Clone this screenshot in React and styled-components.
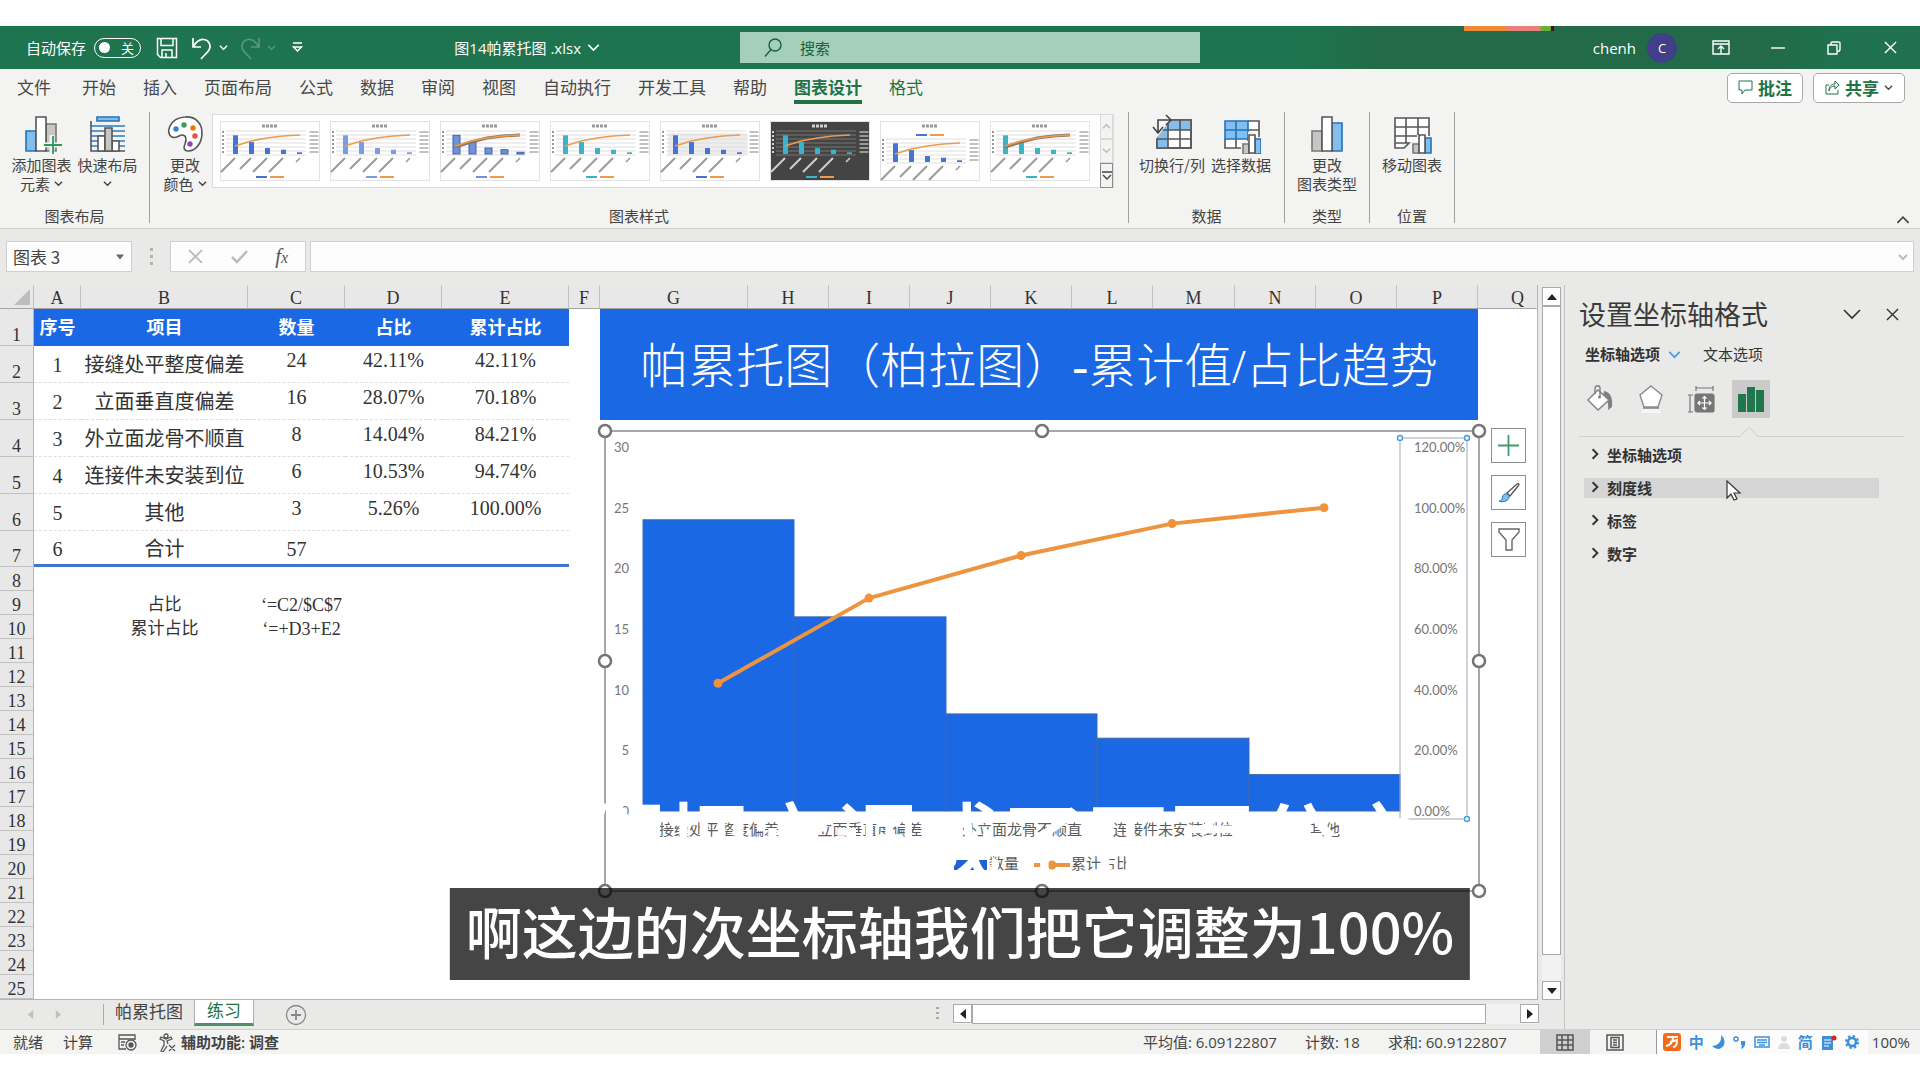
import styled, { createGlobalStyle } from "styled-components";

const sans = `"Open Sans", "Noto Sans CJK SC", sans-serif`;
const cjk = `"Noto Sans CJK SC", "Noto Sans", sans-serif`;
const serif = `"Liberation Serif", "Noto Sans CJK SC", serif`;

const GlobalStyle = createGlobalStyle`
  * {
    box-sizing: border-box;
  }

  body {
    margin: 0;
    background: #fff;
    font-family: ${cjk};
    color: #444;
  }

  button,
  input {
    font: inherit;
    color: inherit;
    margin: 0;
    padding: 0;
    border: 0;
    background: none;
  }

  svg {
    display: block;
    flex-shrink: 0;
  }
`;

const Stage = styled.div`
  position: relative;
  min-height: 100vh;
  padding: 26px 0;
  overflow: hidden;
`;

const Window = styled.div`
  background: #e9e9e8;
`;

/* ---------- title bar ---------- */

const TitleBar = styled.header`
  position: relative;
  display: grid;
  grid-template-columns: 740px 460px 1fr;
  align-items: center;
  height: 43px;
  background: linear-gradient(90deg, #1e744e 68%, #226a48 72%, #226a48 92%, #1f724d 96%);
  color: #fff;
  font-size: 15px;
  line-height: 20px;
`;

const QuickAccess = styled.div`
  display: flex;
  align-items: center;
  padding-left: 26px;
`;

const AutoSave = styled.label`
  display: flex;
  align-items: center;
  gap: 8px;
  margin-right: 15px;
`;

const Toggle = styled.span`
  display: flex;
  align-items: center;
  justify-content: space-between;
  width: 47px;
  height: 20px;
  padding: 0 6px 0 4px;
  border: 1px solid #fff;
  border-radius: 10px;
  font-size: 13px;

  input {
    appearance: none;
    width: 11px;
    height: 11px;
    border-radius: 50%;
    background: #fff;
  }
`;

const BarButton = styled.button`
  display: flex;
  align-items: center;
  justify-content: center;
  width: ${(props) => props.$w || 22}px;
  height: 24px;
  margin-right: ${(props) => props.$gap || 0}px;
  opacity: ${(props) => (props.disabled ? 0.25 : 1)};
`;

const FileName = styled.button`
  display: flex;
  align-items: center;
  gap: 6px;
  margin-left: auto;
  margin-right: 140px;
  font-family: ${sans};
`;

const SearchBox = styled.label`
  display: flex;
  align-items: center;
  gap: 18px;
  height: 31px;
  padding-left: 24px;
  background: #a6cfbb;
  color: #17613f;

  input {
    flex: 1;
    min-width: 0;
    outline: 0;
  }

  input::placeholder {
    color: #17613f;
    opacity: 1;
  }
`;

const WindowButtons = styled.div`
  display: flex;
  align-items: center;
  justify-content: flex-end;
  padding-right: 22px;
  font-family: ${sans};
`;

const Avatar = styled.span`
  display: flex;
  align-items: center;
  justify-content: center;
  width: 30px;
  height: 30px;
  margin: 0 35px 0 11px;
  border-radius: 50%;
  background: #413f87;
  font-size: 13px;
`;

const StickerEdge = styled.div`
  position: absolute;
  top: 0;
  right: 366px;
  width: 90px;
  height: 5px;
  background: linear-gradient(90deg, #ee8a35 0 45%, #e8807c 50% 84%, #6cae3a 86% 96%, #3a1712 97%);
`;

/* ---------- ribbon ---------- */

const TabRow = styled.nav`
  display: flex;
  align-items: flex-start;
  height: 41px;
  padding: 4px 15px 0 17px;
  background: #f3f3f2;
  font-size: 17px;
`;

const RibbonTab = styled.button`
  height: 31px;
  margin-right: ${(props) => props.$gap || 27}px;
  line-height: 28px;
  white-space: nowrap;
  color: ${(props) => (props.$green ? "#217346" : "#484848")};
  font-weight: ${(props) => (props.$active ? 700 : 400)};
  border-bottom: 4px solid ${(props) => (props.$active ? "#217346" : "transparent")};
`;

const Actions = styled.div`
  display: flex;
  gap: 10px;
  margin-left: auto;
`;

const ActionButton = styled.button`
  display: flex;
  align-items: center;
  justify-content: center;
  gap: 5px;
  width: ${(props) => props.$w}px;
  height: 30px;
  padding-bottom: 2px;
  border: 1px solid #a9a9a9;
  border-radius: 5px;
  background: #fff;
  color: #217346;
  font-weight: 700;
`;

const Ribbon = styled.section`
  display: flex;
  height: 119px;
  background: #f3f3f2;
  border-bottom: 1px solid #d2d2d0;
  font-size: 15px;
`;

const Group = styled.div`
  display: flex;
  flex-direction: column;
  justify-content: space-between;
  width: ${(props) => props.$w}px;
  height: 111px;
  margin-top: 2px;
  padding-top: 2px;
  border-right: 1px solid #a0a0a0;
`;

const GroupItems = styled.div`
  display: flex;
  justify-content: center;
`;

const GroupLabel = styled.div`
  padding-bottom: 1px;
  text-align: center;
  line-height: 12px;
`;

const BigButton = styled.button`
  display: flex;
  flex-direction: column;
  align-items: center;
  width: ${(props) => props.$w || 66}px;
  line-height: 19px;
  white-space: nowrap;

  svg {
    margin-bottom: 1px;
  }

  span {
    display: flex;
    align-items: center;
    gap: 4px;
    min-height: 19px;
  }

  span svg {
    margin: 0;
  }
`;

const Gallery = styled.div`
  display: flex;
  align-items: center;
  gap: 10px;
  width: 902px;
  height: 74px;
  margin-right: 6px;
  padding-left: 7px;
  border: 1px solid #dcdcdc;
  background: #fff;
`;

const ThumbButton = styled.button`
  width: 100px;
  height: 60px;
`;

const GalleryScroll = styled.div`
  display: grid;
  grid-template-rows: 1fr 1fr 1fr;
  width: 19px;
  height: 74px;
  margin-left: auto;
`;

const GalleryArrow = styled.button`
  display: flex;
  align-items: center;
  justify-content: center;
  background: #f3f3f2;
  border: 1px solid ${(props) => (props.$strong ? "#8c8c8c" : "#dadada")};
`;

const Collapse = styled.button`
  align-self: flex-end;
  margin: 0 10px 1px auto;
`;

/* ---------- formula bar ---------- */

const FormulaRow = styled.div`
  display: flex;
  align-items: flex-start;
  height: 56px;
  padding: 12px 6px 0;
`;

const FormulaBox = styled.div`
  display: flex;
  align-items: center;
  height: 31px;
  width: ${(props) => props.$w}px;
  border: 1px solid #cfcfcf;
  background: #fdfdfd;
`;

const NameBox = styled(FormulaBox)`
  padding: 0 7px 0 6px;
  font-size: 17px;

  input {
    flex: 1;
    min-width: 0;
  }
`;

const DotsGrip = styled.span`
  width: 3px;
  height: 17px;
  margin: 7px 17px 7px 18px;
  border-left: 3px dotted #b3b3b3;
`;

const FxBox = styled(FormulaBox)`
  justify-content: space-around;
  padding: 0 3px;
  margin-right: 4px;
`;

const FxButton = styled.button`
  font: italic 21px/24px "Liberation Serif", serif;
  color: #555;

  small {
    font-size: 16px;
  }
`;

const FormulaInput = styled(FormulaBox)`
  flex: 1;
  padding-right: 5px;

  input {
    flex: 1;
    height: 29px;
  }
`;

/* ---------- sheet ---------- */

const Workspace = styled.div`
  display: flex;
`;

const SheetColumn = styled.div`
  flex: 1;
  min-width: 0;
  border-right: 1px solid #c4c4c4;
`;

const SheetRow = styled.div`
  display: flex;
  gap: 4px;
  padding-right: 3px;
`;

const SheetPane = styled.div`
  position: relative;
  flex: 1;
  min-width: 0;
  border-right: 1px solid #b5b5b5;
  border-bottom: 1px solid #b5b5b5;
`;

const Grid = styled.table`
  width: 100%;
  table-layout: fixed;
  border-collapse: separate;
  border-spacing: 0;
  background: #fff;
  font-family: ${serif};
  font-size: 18px;
  line-height: 20px;
  color: #333;

  th,
  td {
    padding: 0;
    font-weight: 400;
    text-align: center;
    white-space: nowrap;
  }
`;

const ColHead = styled.th`
  height: 24px;
  background: #e8e8e8;
  border-right: 1px solid ${(props) => (props.$last ? "transparent" : "#c2c2c2")};
  border-bottom: 1px solid #a5a5a5;
  vertical-align: bottom;

  && {
    text-align: ${(props) => (props.$last ? "right" : "center")};
    padding-right: ${(props) => (props.$last ? 12 : 0)}px;
  }
`;

const Corner = styled(ColHead)`
  svg {
    margin: 0 3px 3px auto;
  }
`;

const RowHead = styled.th`
  height: ${(props) => props.$h}px;
  background: #e8e8e8;
  border-right: 1px solid #b5b5b5;
  border-bottom: 1px solid #c2c2c2;
  line-height: ${(props) => (props.$h > 24 ? 20 : 18)}px;
  vertical-align: bottom;
`;

const HeadCell = styled.td`
  background: #1b68e4;
  color: #fff;

  && {
    font-weight: 700;
  }
`;

const DataCell = styled.td`
  font-size: 20px;
  line-height: 26px;
  vertical-align: ${(props) => (props.$top ? "top" : "middle")};
  border-bottom: ${(props) => (props.$last ? "3px solid #3f74d1" : "1px dashed #dedede")};

  && {
    padding-top: ${(props) => (props.$top ? 1 : 2)}px;
  }
`;

const NoteCell = styled.td`
  font-size: ${(props) => (props.$formula ? 18 : 17)}px;

  && {
    padding: 3px 0 0 ${(props) => (props.$formula ? 10 : 0)}px;
  }
`;

const BannerCell = styled.td`
  background: #1b68e4;
  color: #fff;
  font-size: 48px;
  line-height: 56px;

  && {
    padding-top: 4px;
    font-weight: 300;
  }
`;

const ChartFrame = styled.div`
  position: absolute;
  left: 596px;
  top: 138px;
`;

const ChartTools = styled.div`
  position: absolute;
  left: 1491px;
  top: 143px;
  display: grid;
  gap: 12px;
`;

const ToolButton = styled.button`
  display: flex;
  align-items: center;
  justify-content: center;
  width: 35px;
  height: 35px;
  border: 1px solid #8d8d8d;
  background: #fff;
`;

const ScrollTrack = styled.div`
  display: flex;
  flex-direction: ${(props) => (props.$vertical ? "column" : "row")};
  justify-content: space-between;
  background: #f2f2f2;
  ${(props) => (props.$vertical ? "width: 19px; margin: 2px 0 0;" : "flex: 1; height: 20px;")}
`;

const ScrollButton = styled.button`
  display: flex;
  align-items: center;
  justify-content: center;
  flex: none;
  width: 19px;
  height: 19px;
  border: 1px solid #aaa;
  background: #fff;
`;

const Thumb = styled.div`
  flex: ${(props) => props.$size};
  border: 1px solid #aaa;
  background: #fff;
`;

const TrackGap = styled.div`
  flex: ${(props) => props.$size};
`;

const SheetTabs = styled.div`
  display: flex;
  align-items: flex-start;
  height: 29px;
  padding-right: 25px;
  font-size: 17px;
`;

const NavArrows = styled.div`
  display: flex;
  align-items: center;
  justify-content: space-between;
  width: 104px;
  height: 21px;
  margin-top: 4px;
  padding: 0 40px 0 26px;
  border-right: 1px solid #aaa;
`;

const SheetTab = styled.button`
  height: 26px;
  padding: 0 ${(props) => (props.$active ? 12 : 11)}px 4px;
  line-height: 20px;
  ${(props) =>
    props.$active &&
    `
    background: #fff;
    color: #217346;
    border: 1px solid #b0b0b0;
    border-top: 0;
    border-bottom: 3px solid #4b8f6c;
  `}
`;

const AddSheet = styled.button`
  margin: 4px auto 0 31px;
`;

const HorizontalBar = styled.div`
  display: flex;
  align-items: center;
  gap: 14px;
  width: 603px;
  margin-top: 4px;
`;

/* ---------- task pane ---------- */

const TaskPane = styled.aside`
  width: 355px;
  padding: 10px 16px 0 14px;
  color: #333;
`;

const PaneTitle = styled.div`
  display: flex;
  align-items: center;
  gap: 24px;
  padding-right: 5px;

  h2 {
    flex: 1;
    margin: 0;
    font-size: 27px;
    line-height: 38px;
    font-weight: 400;
    color: #3a3a3a;
  }
`;

const PaneTabs = styled.div`
  display: flex;
  align-items: center;
  padding: 9px 0 0 6px;
  font-size: 15px;
  line-height: 24px;
`;

const PaneTab = styled.button`
  display: flex;
  align-items: center;
  gap: 8px;
  margin-right: 22px;
  font-weight: ${(props) => (props.$active ? 700 : 400)};
`;

const PaneIcons = styled.div`
  display: flex;
  align-items: center;
  gap: 12px;
  height: 38px;
  margin-top: 14px;
  padding-left: 3px;
`;

const PaneIcon = styled.button`
  display: flex;
  align-items: center;
  justify-content: center;
  width: 38px;
  height: 38px;
  background: ${(props) => (props.$active ? "#cacaca" : "none")};
`;

const PaneRule = styled.div`
  display: flex;
  align-items: flex-end;
  margin-top: 8px;

  &::before,
  &::after {
    content: "";
    width: 161px;
    border-bottom: 1px solid #cfcfcf;
  }

  &::after {
    flex: 1;
  }
`;

const OptionList = styled.div`
  display: grid;
  gap: 13px;
  padding: 8px 25px 0 5px;
`;

const Option = styled.button`
  display: flex;
  align-items: center;
  gap: 6px;
  height: 20px;
  padding: 0 0 2px 5px;
  background: ${(props) => (props.$hover ? "#d5d5d5" : "none")};
  font-size: 15px;
  font-weight: 700;
`;

const Pointer = styled.svg`
  position: absolute;
  right: 176px;
  top: 480px;
`;

/* ---------- status bar ---------- */

const StatusBar = styled.footer`
  display: flex;
  align-items: center;
  height: 25px;
  padding: 0 10px 0 13px;
  background: #f3f3f2;
  border-top: 1px solid #d0d0d0;
  font-family: ${sans};
  font-size: 15px;
  line-height: 22px;
  white-space: nowrap;
`;

const StatusItem = styled.span`
  margin-right: ${(props) => props.$gap}px;
  font-weight: ${(props) => (props.$bold ? 600 : 400)};
`;

const StatusNumbers = styled.div`
  display: flex;
  gap: 28px;
  margin-left: auto;
  margin-right: 33px;
`;

const ViewButton = styled.button`
  display: flex;
  align-items: center;
  justify-content: center;
  width: 50px;
  height: 24px;
  background: ${(props) => (props.$active ? "#cfcfcf" : "none")};
`;

const ImeBar = styled.div`
  display: flex;
  align-items: center;
  justify-content: space-between;
  width: 212px;
  height: 24px;
  margin: 0 4px 0 16px;
  padding: 0 9px 0 6px;
  border-left: 1px solid #999;
  background: #fcfcfc;
  color: #3d8fdb;
  font-family: ${cjk};
  font-weight: 700;
`;

/* ---------- subtitles ---------- */

const Subtitle = styled.div`
  position: absolute;
  left: 50%;
  top: 888px;
  transform: translateX(-50%);
  padding: 2px 16px 10px;
  background: rgba(0, 0, 0, 0.73);
  color: #fff;
  font-size: 56px;
  line-height: 80px;
  font-weight: 500;
  white-space: nowrap;
`;

const FadedSubtitle = styled.div`
  position: absolute;
  left: 50%;
  top: 795px;
  transform: translateX(-50%);
  color: #fff;
  font-size: 84px;
  line-height: 84px;
  font-weight: 500;
  white-space: nowrap;
`;

const Chevron = ({ size = 10, color = "currentColor", dir = "down", w = 1.5 }) => {
  const turn = { down: 0, up: 180, right: -90 }[dir];
  return (
    <svg width={size} height={size} viewBox="0 0 10 10" fill="none" stroke={color} strokeWidth={w}>
      <path d="M1 3l4 4 4-4" transform={`rotate(${turn} 5 5)`} />
    </svg>
  );
};

const Triangle = ({ dir, color = "#222", size = 10 }) => {
  const turn = { up: 0, right: 90, down: 180, left: 270 }[dir];
  return (
    <svg width={size} height={size} viewBox="0 0 10 10">
      <path d="M0 8l5-6 5 6z" fill={color} transform={`rotate(${turn} 5 5)`} />
    </svg>
  );
};

const Cross = ({ size = 14, color = "currentColor", w = 1.5 }) => (
  <svg width={size} height={size} viewBox="0 0 14 14" stroke={color} strokeWidth={w}>
    <path d="M1 1l12 12M13 1L1 13" />
  </svg>
);

const UndoIcon = ({ flip }) => (
  <svg width="22" height="24" viewBox="0 0 22 24" fill="none" stroke="#fff" strokeWidth="1.7">
    <path
      d="M2 2v9h8M2.500 10.500C5 6 9 3 13 3.500c5 .6 7.500 6 5 10.500-1.500 2.500-4 4.500-8 9"
      transform={flip ? "translate(22 0) scale(-1 1)" : undefined}
    />
  </svg>
);

/* ribbon icons, drawn on a 40x40 board */
const AddElementIcon = () => (
  <svg width="40" height="40" viewBox="0 0 40 40" strokeWidth="1.600">
    <path d="M4 17h10v20H4z" fill="#83beec" stroke="#1f74bd" />
    <path d="M24 10h10v27H24z" fill="#c8c6c4" stroke="#797774" />
    <path d="M14 3h10v34H14z" fill="#fff" stroke="#555" />
    <path d="M30 21v19M20 31h20" stroke="#f3f3f2" strokeWidth="5" />
    <path d="M31 22v18M22 31h18" stroke="#2f9a5c" strokeWidth="1.800" />
  </svg>
);

const QuickLayoutIcon = () => (
  <svg width="40" height="40" viewBox="0 0 40 40" fill="none" strokeWidth="1.600">
    <path d="M9 3h22v4H9z" fill="#83beec" stroke="#1f74bd" />
    <path d="M3 12h34M3 17h34M3 22h34M3 27h34M3 32h34" stroke="#2b7cc0" />
    <path d="M3 7v30h34" stroke="#555" />
    <path d="M10 22h7v15h-7zM24 27h7v10h-7z" fill="#fff" stroke="#555" />
    <path d="M17 14h7v23h-7z" fill="#c8c6c4" stroke="#555" />
  </svg>
);

const PaletteIcon = () => (
  <svg width="40" height="40" viewBox="0 0 40 40">
    <path
      d="M20 3c10-1 17 6 17 16 0 9-5 17-13 18-5 .5-6-3-4-7 2-5 1-9-3-9-3 0-6 4-10 2C0 20 4 4 20 3z"
      fill="#fff"
      stroke="#555"
      strokeWidth="1.600"
    />
    <circle cx="11" cy="15" r="2.700" fill="#2b88d0" />
    <circle cx="19" cy="11" r="2.700" fill="#3b9b5e" />
    <circle cx="28" cy="14" r="2.700" fill="#e8770e" />
    <circle cx="30" cy="22" r="2.700" fill="#e0524d" />
    <circle cx="25" cy="30" r="2.700" fill="#9546b0" />
  </svg>
);

const SwitchRowColIcon = () => (
  <svg width="40" height="40" viewBox="0 0 40 40" fill="none" strokeWidth="1.600">
    <path d="M5 6h34v28H5z" fill="#fff" stroke="#555" />
    <path d="M5 6h34v10H16v18H5z" fill="#83beec" />
    <path d="M5 6h34v28H5zM16 6v28M28 6v28M5 16h34M5 25h34" stroke="#555" />
    <path d="M1 1h21l-18 24h-3z" fill="#f3f3f2" />
    <path d="M6 18V6h12M1 13l5 6 5-6M14 1l5 5-5 5" stroke="#444" />
  </svg>
);

const SelectDataIcon = () => (
  <svg width="40" height="40" viewBox="0 0 40 40" fill="none" strokeWidth="1.600">
    <path d="M4 7h34v27H4z" fill="#fff" />
    <path d="M4 7h23v18H4z" fill="#83beec" />
    <path d="M4 25v9h34V7H27M15 25v9M27 25v9M27 16h11M27 25h11" stroke="#555" />
    <path d="M4 7h23v18H4zM15 7v18M4 16h23" stroke="#1f74bd" />
    <path d="M20 27h7v-9h7v5h7v17H20z" fill="#f3f3f2" />
    <path d="M22 30h6v10h-6z" fill="#c8c6c4" stroke="#797774" />
    <path d="M34 25h6v15h-6z" fill="#83beec" stroke="#1f74bd" />
    <path d="M28 21h6v18h-6z" fill="#fff" stroke="#555" />
  </svg>
);

const ChartTypeIcon = () => (
  <svg width="40" height="40" viewBox="0 0 40 40" strokeWidth="1.600">
    <path d="M5 17h10v20H5z" fill="#c8c6c4" stroke="#797774" />
    <path d="M25 9h10v28H25z" fill="#83beec" stroke="#1f74bd" />
    <path d="M15 3h10v34H15z" fill="#fff" stroke="#555" />
  </svg>
);

const MoveChartIcon = () => (
  <svg width="40" height="40" viewBox="0 0 40 40" fill="none" strokeWidth="1.600">
    <path d="M3 4h34v24H18l-5 6H3z" fill="#fff" />
    <path d="M37 22V4H3v30h9l5-5H3M14 4v25M26 4v17M3 13h34M3 22h22" stroke="#555" />
    <path d="M21 30h6v9h-6z" fill="#c8c6c4" stroke="#797774" />
    <path d="M33 24h6v15h-6z" fill="#83beec" stroke="#1f74bd" />
    <path d="M27 21h6v18h-6z" fill="#fff" stroke="#555" />
  </svg>
);

const StyleThumb = ({ bar, dark, shift = 0, hatch, glow, ring }) => {
  const heights = [22, 14, 7, 5, 2];
  const line = dark ? "#777" : "#dedede";
  const ink = dark ? "#d0d0d0" : "#999";
  return (
    <svg width="100" height="60" viewBox="0 0 100 60">
      <rect x="0.500" y="0.500" width="99" height="59" fill={dark ? "#444" : "#fff"} stroke="#e2e2e2" />
      <path d="M42 5h16" stroke={ink} strokeWidth="3" strokeDasharray="3 1" />
      {hatch && <path d="M8 12h80v22H8z" fill="#ededed" />}
      <g transform={`translate(0 ${shift})`}>
        {[10, 14, 18, 22, 26, 30, 34].map((y) => (
          <path key={y} d={`M6 ${y}h80`} stroke={line} />
        ))}
        <path d="M3 10v24" stroke={ink} strokeWidth="2" strokeDasharray="2 2" />
        <path d="M94 10v24" stroke={ink} strokeWidth="9" strokeDasharray="2 2" opacity="0.600" />
        {heights.map((h, i) => (
          <rect
            key={i}
            x={13 + i * 16}
            y={33 - h * 0.85}
            width={ring ? 7 : 5}
            height={h * 0.85}
            fill={bar}
            stroke={ring ? "#3a62b5" : "none"}
          />
        ))}
        {glow && <path d="M15 26l16-5 16-4 16-2 17-1" stroke="#8a7666" strokeWidth="3" fill="none" />}
        <path d="M15 25l16-5 16-3 16-2 17-1" stroke="#f09a4e" strokeWidth="1.700" fill="none" />
        {[15, 31, 47, 63].map((x, i) => (
          <path
            key={x}
            d={`M${x} 37l${i === 1 ? -11 : -14} ${i === 1 ? 11 : 14}`}
            stroke={ink}
            strokeWidth="2"
          />
        ))}
        <path d="M80 37l-4 4" stroke={ink} strokeWidth="1.600" />
      </g>
      <path d={shift ? "M36 14h11" : "M36 56h11"} stroke={bar} strokeWidth="2" />
      <path d={shift ? "M50 14h14" : "M50 56h14"} stroke="#f09a4e" strokeWidth="2" />
    </svg>
  );
};

const thumbs = [
  { id: 1, bar: "#4673d1" },
  { id: 2, bar: "#7d9be0" },
  { id: 3, bar: "#7391d6", glow: true, ring: true },
  { id: 4, bar: "#3cb3c4" },
  { id: 5, bar: "#4673d1", hatch: true },
  { id: 6, bar: "#35b5cf", dark: true },
  { id: 7, bar: "#4673d1", shift: 8 },
  { id: 8, bar: "#3cb3c4", glow: true },
];

const ribbonTabs = [
  { name: "文件", gap: 31 },
  { name: "开始" },
  { name: "插入" },
  { name: "页面布局" },
  { name: "公式" },
  { name: "数据" },
  { name: "审阅" },
  { name: "视图" },
  { name: "自动执行" },
  { name: "开发工具" },
  { name: "帮助" },
  { name: "图表设计", active: true },
  { name: "格式", green: true },
];

const columns = [
  ["A", 47],
  ["B", 167],
  ["C", 97],
  ["D", 97],
  ["E", 127],
  ["F", 31],
  ["G", 148],
  ["H", 81],
  ["I", 81],
  ["J", 81],
  ["K", 81],
  ["L", 81],
  ["M", 82],
  ["N", 81],
  ["O", 81],
  ["P", 81],
  ["Q"],
];

const tableHeader = ["序号", "项目", "数量", "占比", "累计占比"];

const items = [
  { id: 1, name: "接缝处平整度偏差", count: 24, share: "42.11%", total: "42.11%" },
  { id: 2, name: "立面垂直度偏差", count: 16, share: "28.07%", total: "70.18%" },
  { id: 3, name: "外立面龙骨不顺直", count: 8, share: "14.04%", total: "84.21%" },
  { id: 4, name: "连接件未安装到位", count: 6, share: "10.53%", total: "94.74%" },
  { id: 5, name: "其他", count: 3, share: "5.26%", total: "100.00%" },
];

const notes = {
  9: ["占比", "‘=C2/$C$7"],
  10: ["累计占比", "‘=+D3+E2"],
};

const Sheet = () => (
  <Grid>
    <colgroup>
      <col style={{ width: 34 }} />
      {columns.map(([name, width]) => (
        <col key={name} style={{ width }} />
      ))}
    </colgroup>
    <thead>
      <tr>
        <Corner>
          <svg width="16" height="16" viewBox="0 0 16 16">
            <path d="M16 0v16H0z" fill="#bdbdbd" />
          </svg>
        </Corner>
        {columns.map(([name]) => (
          <ColHead key={name} $last={name === "Q"}>
            {name}
          </ColHead>
        ))}
      </tr>
    </thead>
    <tbody>
      <tr>
        <RowHead $h={37}>1</RowHead>
        {tableHeader.map((text) => (
          <HeadCell key={text}>{text}</HeadCell>
        ))}
        <td />
        <BannerCell colSpan={10} rowSpan={3}>
          帕累托图（柏拉图）-累计值/占比趋势
        </BannerCell>
        <td />
      </tr>
      {items.map((item) => (
        <tr key={item.id}>
          <RowHead $h={37}>{item.id + 1}</RowHead>
          <DataCell>{item.id}</DataCell>
          <DataCell>{item.name}</DataCell>
          <DataCell $top>{item.count}</DataCell>
          <DataCell $top>{item.share}</DataCell>
          <DataCell $top>{item.total}</DataCell>
          <td />
        </tr>
      ))}
      <tr>
        <RowHead $h={36}>7</RowHead>
        <DataCell $last>6</DataCell>
        <DataCell $last>合计</DataCell>
        <DataCell $last>57</DataCell>
        <DataCell $last />
        <DataCell $last />
      </tr>
      {Array.from({ length: 18 }, (_, i) => i + 8).map((row) => (
        <tr key={row}>
          <RowHead $h={24}>{row}</RowHead>
          {notes[row] && (
            <>
              <td />
              <NoteCell>{notes[row][0]}</NoteCell>
              <NoteCell $formula>{notes[row][1]}</NoteCell>
            </>
          )}
        </tr>
      ))}
    </tbody>
  </Grid>
);

const ParetoChart = () => {
  // the drawing area keeps 8px around the frame for its handles
  const left = 47;
  const base = 388;
  const height = 364;
  const step = 152;
  const px = (i) => left + i * step - Math.round(i / 2);
  const points = items.map((item, i) => [
    px(i) + 75,
    base - (parseFloat(item.total) / 120) * height,
  ]);
  const handles = [
    [9, 8],
    [446, 8],
    [883, 8],
    [9, 238],
    [883, 238],
    [9, 468],
    [446, 468],
    [883, 468],
  ];

  return (
    <svg width="892" height="476" viewBox="0 0 892 476" fontFamily={`Lato, "Noto Sans CJK SC", sans-serif`}>
      <rect x="9" y="8" width="874" height="460" fill="#fff" stroke="#8a8a8a" strokeWidth="1.500" />
      {items.map((item, i) => {
        const h = (item.count / 30) * height;
        return (
          <rect
            key={item.id}
            x={px(i)}
            y={base - h}
            width={px(i + 1) - px(i)}
            height={h}
            fill="#1b68e4"
            stroke="#3c69b0"
          />
        );
      })}
      <polyline points={points.join(" ")} fill="none" stroke="#ed9440" strokeWidth="4" strokeLinejoin="round" />
      {points.map(([x, y]) => (
        <circle key={x} cx={x} cy={y} r="4.500" fill="#f0923a" />
      ))}
      <g fontSize="13" fill="#757575">
        {[0, 5, 10, 15, 20, 25, 30].map((n) => (
          <text key={n} x="33" y={base + 5 - (n / 30) * height} textAnchor="end">
            {n}
          </text>
        ))}
        {[0, 20, 40, 60, 80, 100, 120].map((n) => (
          <text key={n} x="818" y={base + 5 - (n / 120) * height}>
            {n.toFixed(2)}%
          </text>
        ))}
      </g>
      <g fontSize="15" fill="#5c5c5c">
        {items.map((item, i) => (
          <text key={item.id} x={px(i) + 76} y="412" textAnchor="middle">
            {item.name}
          </text>
        ))}
        <path d="M358 437h33v10h-33z" fill="#1f62d2" />
        <text x="393" y="446">
          数量
        </text>
        <path d="M438 442h36" stroke="#ed9440" strokeWidth="4" />
        <circle cx="456" cy="442" r="4.500" fill="#ed9440" />
        <text x="475" y="446">
          累计占比
        </text>
      </g>
      <rect x="804" y="15" width="67" height="381" fill="none" stroke="#a3a9ad" />
      {[[804, 15], [871, 15], [871, 396]].map(([x, y]) => (
        <circle key={`${x}-${y}`} cx={x} cy={y} r="2.500" fill="#fff" stroke="#4a9fd6" strokeWidth="1.500" />
      ))}
      {handles.map(([x, y]) => (
        <circle key={`${x}-${y}`} cx={x} cy={y} r="6" fill="#fff" stroke="#757575" strokeWidth="2.500" />
      ))}
    </svg>
  );
};

const App = () => {
  return (
    <Stage>
      <GlobalStyle />
      <Window>
        <TitleBar>
          <QuickAccess>
            <AutoSave>
              自动保存
              <Toggle>
                <input type="checkbox" role="switch" />关
              </Toggle>
            </AutoSave>
            <BarButton $gap={13} aria-label="保存">
              <svg width="22" height="22" viewBox="0 0 22 22" fill="none" stroke="#fff" strokeWidth="1.500">
                <path d="M1.500 1.500h19v19h-16l-3-3zM5 1.500v7h12v-7M6 20v-7h10v7M10 20v-4" />
              </svg>
            </BarButton>
            <BarButton $gap={4} aria-label="撤消">
              <UndoIcon />
            </BarButton>
            <BarButton $w={12} $gap={10} aria-label="撤消列表">
              <Chevron size={9} color="#fff" />
            </BarButton>
            <BarButton $gap={4} disabled aria-label="恢复">
              <UndoIcon flip />
            </BarButton>
            <BarButton $w={12} $gap={13} disabled aria-label="恢复列表">
              <Chevron size={9} color="#fff" />
            </BarButton>
            <BarButton $w={14} aria-label="自定义">
              <svg width="11" height="11" viewBox="0 0 11 11" fill="none" stroke="#fff" strokeWidth="1.400">
                <path d="M1 1h9M1.500 5l4 4 4-4z" />
              </svg>
            </BarButton>
            <FileName>
              图14帕累托图 .xlsx
              <Chevron size={13} color="#fff" w={1.2} />
            </FileName>
          </QuickAccess>
          <SearchBox>
            <svg width="18" height="20" viewBox="0 0 18 20" fill="none" stroke="#17613f" strokeWidth="1.400">
              <circle cx="11" cy="7" r="6" />
              <path d="M7 11.500l-6 7" />
            </svg>
            <input type="text" placeholder="搜索" aria-label="搜索" />
          </SearchBox>
          <WindowButtons>
            chenh
            <Avatar>C</Avatar>
            <BarButton $gap={40} aria-label="功能区显示选项" $w={18}>
              <svg width="18" height="15" viewBox="0 0 18 15" fill="none" stroke="#fff" strokeWidth="1.400">
                <path d="M1 1h16v13H1zM1 4h16M9 14V6M6 9l3-3 3 3" />
              </svg>
            </BarButton>
            <BarButton $gap={40} $w={16} aria-label="最小化">
              <svg width="14" height="14" viewBox="0 0 14 14" stroke="#fff" strokeWidth="1.400">
                <path d="M0 7h14" />
              </svg>
            </BarButton>
            <BarButton $gap={40} $w={16} aria-label="还原">
              <svg width="14" height="14" viewBox="0 0 14 14" fill="none" stroke="#fff" strokeWidth="1.400">
                <path d="M1 4h9v9H1zM4 3.500c0-2 0-2.500 2-2.500h5c2 0 2 0 2 2v5c0 2-.5 2.500-2.500 2.500" />
              </svg>
            </BarButton>
            <BarButton $w={16} aria-label="关闭">
              <Cross size={13} color="#fff" />
            </BarButton>
          </WindowButtons>
          <StickerEdge />
        </TitleBar>

        <TabRow>
          {ribbonTabs.map((tab) => (
            <RibbonTab key={tab.name} $gap={tab.gap} $active={tab.active} $green={tab.active || tab.green}>
              {tab.name}
            </RibbonTab>
          ))}
          <Actions>
            <ActionButton $w={76}>
              <svg width="15" height="15" viewBox="0 0 15 15" fill="none" stroke="#217346">
                <path d="M1 1h13v9H7l-3 4v-4H1z" />
              </svg>
              批注
            </ActionButton>
            <ActionButton $w={92}>
              <svg width="15" height="16" viewBox="0 0 15 16" fill="none" stroke="#217346">
                <path d="M4 6H1v9h12v-4M4 12c0-5 2-7 6-7V2l4 4-4 4V7c-3 0-5 1-6 5z" />
              </svg>
              共享
              <Chevron size={9} color="#444" />
            </ActionButton>
          </Actions>
        </TabRow>

        <Ribbon>
          <Group $w={150}>
            <GroupItems>
              <BigButton>
                <AddElementIcon />
                <span>添加图表</span>
                <span>
                  元素 <Chevron size={9} />
                </span>
              </BigButton>
              <BigButton>
                <QuickLayoutIcon />
                <span>快速布局</span>
                <span>
                  <Chevron size={9} />
                </span>
              </BigButton>
            </GroupItems>
            <GroupLabel>图表布局</GroupLabel>
          </Group>
          <Group $w={979}>
            <GroupItems>
              <BigButton $w={54}>
                <PaletteIcon />
                <span>更改</span>
                <span>
                  颜色 <Chevron size={9} />
                </span>
              </BigButton>
              <Gallery>
                {thumbs.map(({ id, ...thumb }) => (
                  <ThumbButton key={id} aria-label={`样式 ${id}`}>
                    <StyleThumb {...thumb} />
                  </ThumbButton>
                ))}
                <GalleryScroll>
                  <GalleryArrow aria-label="上一行">
                    <Chevron dir="up" size={9} color="#bbb" />
                  </GalleryArrow>
                  <GalleryArrow aria-label="下一行">
                    <Chevron size={9} color="#bbb" />
                  </GalleryArrow>
                  <GalleryArrow $strong aria-label="其他样式">
                    <svg width="10" height="10" viewBox="0 0 10 10" fill="none" stroke="#444" strokeWidth="1.400">
                      <path d="M0 1h10M1 4l4 4 4-4" />
                    </svg>
                  </GalleryArrow>
                </GalleryScroll>
              </Gallery>
            </GroupItems>
            <GroupLabel>图表样式</GroupLabel>
          </Group>
          <Group $w={156}>
            <GroupItems>
              <BigButton $w={69}>
                <SwitchRowColIcon />
                <span>切换行/列</span>
              </BigButton>
              <BigButton $w={69}>
                <SelectDataIcon />
                <span>选择数据</span>
              </BigButton>
            </GroupItems>
            <GroupLabel>数据</GroupLabel>
          </Group>
          <Group $w={85}>
            <GroupItems>
              <BigButton>
                <ChartTypeIcon />
                <span>更改</span>
                <span>图表类型</span>
              </BigButton>
            </GroupItems>
            <GroupLabel>类型</GroupLabel>
          </Group>
          <Group $w={85}>
            <GroupItems>
              <BigButton>
                <MoveChartIcon />
                <span>移动图表</span>
              </BigButton>
            </GroupItems>
            <GroupLabel>位置</GroupLabel>
          </Group>
          <Collapse aria-label="折叠功能区">
            <Chevron dir="up" size={14} w={1.2} />
          </Collapse>
        </Ribbon>

        <FormulaRow>
          <NameBox $w={126}>
            <input type="text" defaultValue="图表 3" aria-label="名称框" />
            <Triangle dir="down" color="#666" size={8} />
          </NameBox>
          <DotsGrip />
          <FxBox $w={136}>
            <button aria-label="取消">
              <Cross size={15} color="#bcbcbc" w={1.8} />
            </button>
            <button aria-label="输入">
              <svg width="17" height="14" viewBox="0 0 17 14" fill="none" stroke="#bcbcbc" strokeWidth="2.500">
                <path d="M1 7l5 5L16 1" />
              </svg>
            </button>
            <FxButton>
              f<small>x</small>
            </FxButton>
          </FxBox>
          <FormulaInput>
            <input type="text" aria-label="编辑栏" />
            <Chevron size={10} color="#bbb" w={2} />
          </FormulaInput>
        </FormulaRow>

        <Workspace>
          <SheetColumn>
            <SheetRow>
              <SheetPane>
                <Sheet />
                <ChartFrame>
                  <ParetoChart />
                </ChartFrame>
                <ChartTools>
                  <ToolButton aria-label="图表元素">
                    <svg width="21" height="21" viewBox="0 0 21 21" stroke="#3f9c67" strokeWidth="1.800">
                      <path d="M10.500 0v21M0 10.500h21" />
                    </svg>
                  </ToolButton>
                  <ToolButton aria-label="图表样式">
                    <svg width="22" height="20" viewBox="0 0 22 20">
                      <path d="M9 10L19 1c1.500-1 2.500 0 1.500 1.500L12 13z" fill="#fff" stroke="#555" strokeWidth="1.300" />
                      <path d="M1 18c3 0 3-1.500 3.500-4C5 11 8 10 10 11.500c2 2 1 5-2 6.500-2 1-5 1-7 0z" fill="#83beec" stroke="#1f74bd" />
                    </svg>
                  </ToolButton>
                  <ToolButton aria-label="图表筛选器">
                    <svg width="22" height="23" viewBox="0 0 22 23" fill="none" stroke="#666" strokeWidth="1.400">
                      <path d="M1 1h20v3l-7 8v10H8V12L1 4z" />
                    </svg>
                  </ToolButton>
                </ChartTools>
              </SheetPane>
              <ScrollTrack $vertical>
                <ScrollButton aria-label="向上滚动">
                  <Triangle dir="up" />
                </ScrollButton>
                <Thumb $size={25} />
                <TrackGap $size={1} />
                <ScrollButton aria-label="向下滚动">
                  <Triangle dir="down" />
                </ScrollButton>
              </ScrollTrack>
            </SheetRow>
            <SheetTabs>
              <NavArrows>
                <Triangle dir="left" color="#c0c0c0" size={9} />
                <Triangle dir="right" color="#c0c0c0" size={9} />
              </NavArrows>
              <SheetTab>帕累托图</SheetTab>
              <SheetTab $active>练习</SheetTab>
              <AddSheet aria-label="新工作表">
                <svg width="22" height="22" viewBox="0 0 22 22" fill="none" stroke="#888" strokeWidth="1.300">
                  <circle cx="11" cy="11" r="9.500" />
                  <path d="M11 6v10M6 11h10" strokeWidth="1.800" />
                </svg>
              </AddSheet>
              <HorizontalBar>
                <svg width="3" height="14" viewBox="0 0 3 14" fill="#aaa">
                  <path d="M0 0h3v2H0zM0 5h3v2H0zM0 10h3v2H0z" />
                </svg>
                <ScrollTrack>
                  <ScrollButton aria-label="向左滚动">
                    <Triangle dir="left" />
                  </ScrollButton>
                  <Thumb $size={15} />
                  <TrackGap $size={1} />
                  <ScrollButton aria-label="向右滚动">
                    <Triangle dir="right" />
                  </ScrollButton>
                </ScrollTrack>
              </HorizontalBar>
            </SheetTabs>
          </SheetColumn>

          <TaskPane>
            <PaneTitle>
              <h2>设置坐标轴格式</h2>
              <button aria-label="任务窗格选项">
                <Chevron size={20} w={0.8} />
              </button>
              <button aria-label="关闭窗格">
                <Cross size={13} />
              </button>
            </PaneTitle>
            <PaneTabs>
              <PaneTab $active>
                坐标轴选项
                <Chevron size={13} color="#4a9be0" w={1.4} />
              </PaneTab>
              <PaneTab>文本选项</PaneTab>
            </PaneTabs>
            <PaneIcons>
              <PaneIcon aria-label="填充与线条">
                <svg width="28" height="28" viewBox="0 0 28 28">
                  <path d="M17 6c6 1 9 6 8 16l-4 3c1-7-1-11-5-14z" fill="#808080" />
                  <path d="M11 5l11 10-11 10L1 15z" fill="#fff" stroke="#808080" strokeWidth="1.400" />
                  <path d="M8 9V3c0-3 5-3 5 0v8" fill="none" stroke="#808080" strokeWidth="1.400" />
                  <circle cx="12.500" cy="12" r="1.500" fill="#808080" />
                </svg>
              </PaneIcon>
              <PaneIcon aria-label="效果">
                <svg width="26" height="28" viewBox="0 0 26 28">
                  <path d="M5 24h16l2 4H3z" fill="#f7f7f7" />
                  <path d="M13 1l11 9-4 12H6L2 10z" fill="#fff" stroke="#8a8a8a" strokeWidth="1.400" />
                  <path d="M5 23h16" stroke="#8a8a8a" strokeWidth="1.600" />
                </svg>
              </PaneIcon>
              <PaneIcon aria-label="大小与属性">
                <svg width="28" height="28" viewBox="0 0 28 28" fill="none" stroke="#777" strokeWidth="1.200">
                  <path d="M9 3h17M9 1v5M26 1v5M3 10v17M1 10h5M1 27h5" />
                  <rect x="8" y="9" width="19" height="18" rx="2" fill="#777" />
                  <path d="M11 18h13M17.500 11.500v13M13 16l-2 2 2 2M22 16l2 2-2 2M15.500 13.500l2-2 2 2M15.500 22.500l2 2 2-2" stroke="#fff" />
                </svg>
              </PaneIcon>
              <PaneIcon $active aria-label="坐标轴选项">
                <svg width="27" height="28" viewBox="0 0 27 28" fill="#20774b">
                  <path d="M0 9h8v18H0zM9 2h8v25H9zM18 5h8v22h-8z" />
                </svg>
              </PaneIcon>
            </PaneIcons>
            <PaneRule>
              <svg width="18" height="11" viewBox="0 0 18 11" fill="none" stroke="#cfcfcf">
                <path d="M0 10.500L9 1l9 9.500" />
              </svg>
            </PaneRule>
            <OptionList>
              {["坐标轴选项", "刻度线", "标签", "数字"].map((name) => (
                <Option key={name} $hover={name === "刻度线"}>
                  <Chevron dir="right" size={12} w={1.6} />
                  {name}
                </Option>
              ))}
            </OptionList>
          </TaskPane>
        </Workspace>

        <StatusBar>
          <StatusItem $gap={20}>就绪</StatusItem>
          <StatusItem $gap={25}>计算</StatusItem>
          <StatusItem $gap={21}>
            <svg width="19" height="17" viewBox="0 0 19 17" fill="none" stroke="#555" strokeWidth="1.300">
              <path d="M17 6V1H1v14h7M1 5h16M3 8h4M3 11h3" />
              <circle cx="13" cy="11" r="5" />
              <circle cx="13" cy="11" r="2" fill="#555" />
            </svg>
          </StatusItem>
          <StatusItem $gap={4}>
            <svg width="19" height="19" viewBox="0 0 19 19" fill="none" stroke="#555" strokeWidth="1.300">
              <circle cx="8" cy="3" r="2" />
              <path d="M10 11l-1-3 5-2-1-2-5 2-5-2-1 2 4 2v4l-3 6 2 1 4-6M11 12l6 6M17 12l-6 6" />
            </svg>
          </StatusItem>
          <StatusItem $bold>辅助功能: 调查</StatusItem>
          <StatusNumbers>
            <span>平均值: 6.09122807</span>
            <span>计数: 18</span>
            <span>求和: 60.9122807</span>
          </StatusNumbers>
          <ViewButton $active aria-label="普通">
            <svg width="18" height="17" viewBox="0 0 18 17" fill="none" stroke="#555" strokeWidth="1.500">
              <path d="M1 1h16v15H1zM6 1v15M12 1v15M1 6h16M1 11h16" />
            </svg>
          </ViewButton>
          <ViewButton aria-label="页面布局">
            <svg width="18" height="17" viewBox="0 0 18 17" fill="none" stroke="#555" strokeWidth="1.500">
              <path d="M1 1h16v15H1zM5 3.500h8v10H5zM7 6h4M7 8.500h4M7 11h4" />
            </svg>
          </ViewButton>
          <ImeBar>
            <svg width="18" height="18" viewBox="0 0 18 18" fill="none" stroke="#fff" strokeWidth="2">
              <rect width="18" height="18" rx="3" fill="#f36a1b" stroke="none" />
              <path d="M4 4h11M7 9l7-2c0 4-1 7-4 7M10 4c0 5-3 8-7 9" />
            </svg>
            <span>中</span>
            <svg width="13" height="14" viewBox="0 0 13 14">
              <path d="M9 0c5 4 5 12-2 14-3 0-5-1-7-3 6 0 10-4 9-11z" fill="#3d8fdb" />
            </svg>
            <svg width="13" height="14" viewBox="0 0 13 14">
              <circle cx="3" cy="4" r="2" fill="none" stroke="#3d8fdb" strokeWidth="1.500" />
              <path d="M8 6h4c1 4-1 7-4 8l1-4H8z" fill="#3d8fdb" />
            </svg>
            <svg width="16" height="12" viewBox="0 0 16 12" fill="none" stroke="#3d8fdb" strokeWidth="1.500">
              <path d="M1 1h14v10H1zM3 4h10M3 6.500h10" />
              <path d="M5 9h6" />
            </svg>
            <svg width="12" height="15" viewBox="0 0 12 15" fill="#dcdcdc">
              <circle cx="6" cy="4" r="3" />
              <path d="M0 14c0-8 12-8 12 0z" />
            </svg>
            <span>简</span>
            <svg width="16" height="15" viewBox="0 0 16 15">
              <path d="M1 1h11v14H1z" fill="#3d8fdb" />
              <path d="M3 5h7M3 8h7M3 11h5" stroke="#fff" />
              <circle cx="13" cy="3" r="2.500" fill="#e02020" />
            </svg>
            <svg width="14" height="14" viewBox="0 0 14 14" fill="none" stroke="#3d8fdb">
              <circle cx="7" cy="7" r="4" strokeWidth="2.500" />
              <circle cx="7" cy="7" r="6" strokeWidth="2" strokeDasharray="2.500 2.200" />
            </svg>
          </ImeBar>
          <span>100%</span>
        </StatusBar>
      </Window>

      <Pointer width="18" height="22" viewBox="0 0 18 22">
        <path d="M1 1v17l4-4 3 6 3-1-3-6h6z" fill="#fff" stroke="#333" strokeWidth="1.200" />
      </Pointer>
      <FadedSubtitle>我们把它调成了正百分之</FadedSubtitle>
      <Subtitle>啊这边的次坐标轴我们把它调整为100%</Subtitle>
    </Stage>
  );
};

export default App;
